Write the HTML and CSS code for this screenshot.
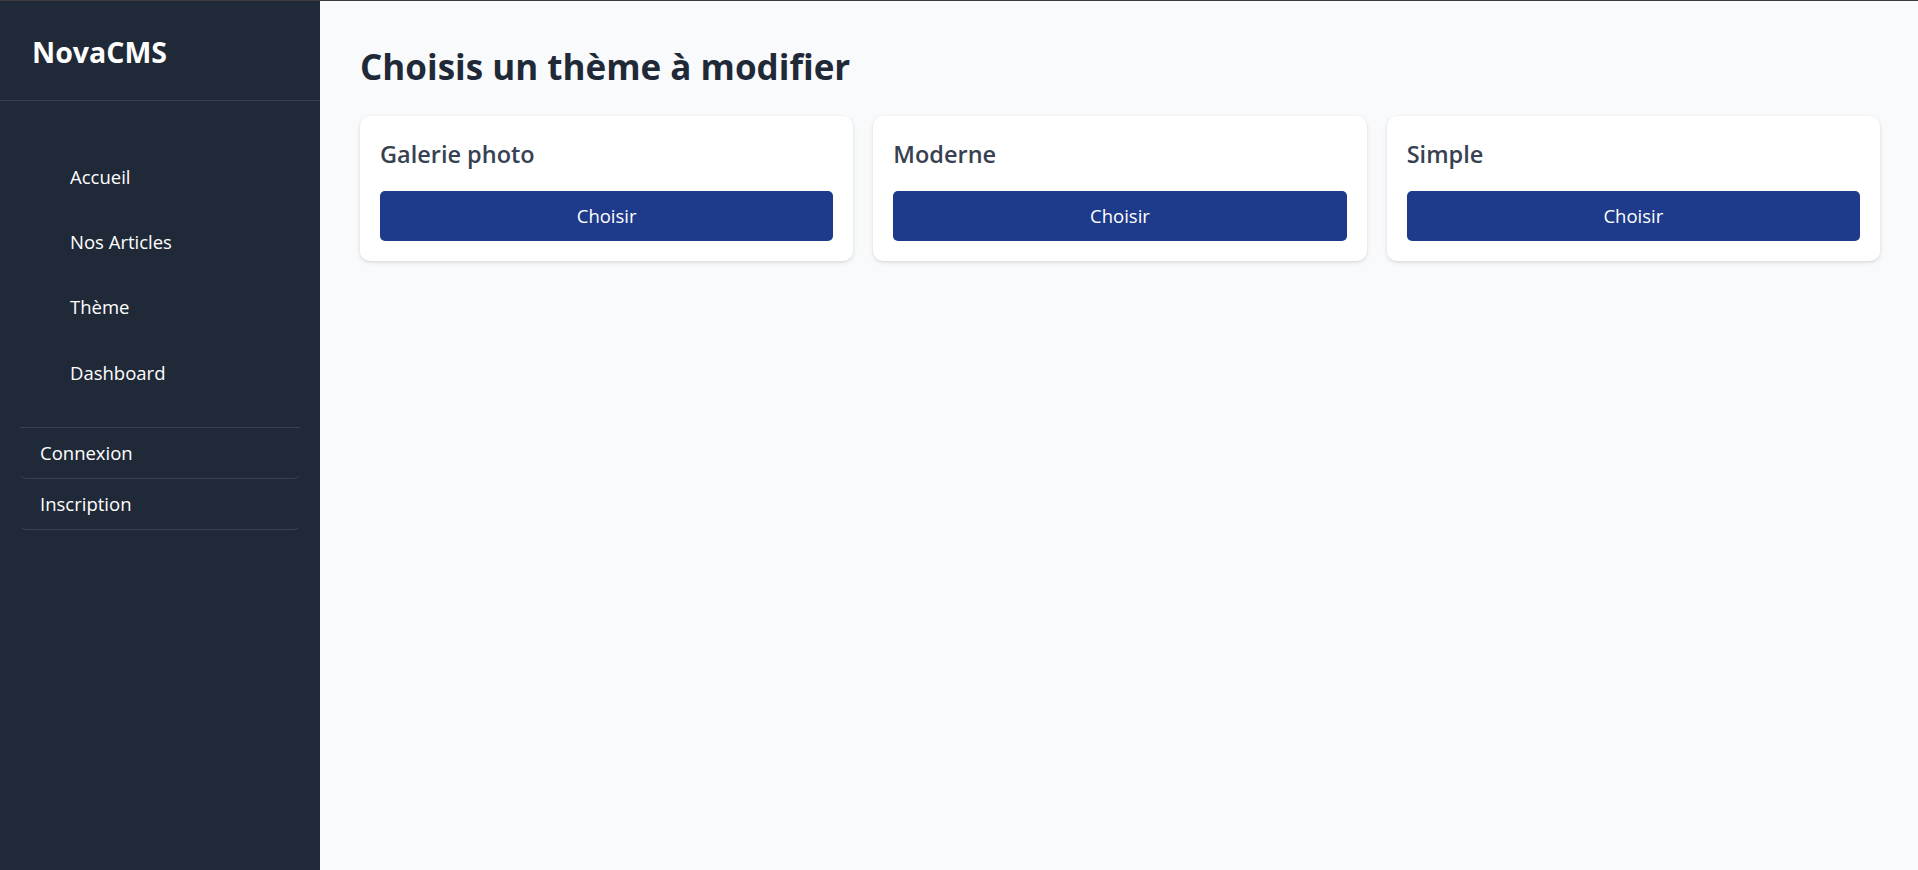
FILE: index.html
```html
<!DOCTYPE html>
<html lang="fr">
<head>
<meta charset="utf-8">
<title>NovaCMS - Thème</title>
<link rel="stylesheet" href="styles.css">
</head>
<body>
<div class="app">
  <aside class="sidebar">
    <div class="brand">NovaCMS</div>
    <ul class="nav">
      <li><a href="#">Accueil</a></li>
      <li><a href="#">Nos Articles</a></li>
      <li><a href="#">Thème</a></li>
      <li><a href="#">Dashboard</a></li>
    </ul>
    <div class="auth">
      <a class="auth-link" href="#">Connexion</a>
      <a class="auth-link" href="#">Inscription</a>
    </div>
  </aside>
  <main class="main">
    <h1 class="title">Choisis un thème à modifier</h1>
    <div class="grid">
      <div class="card">
        <h2 class="card-title">Galerie photo</h2>
        <button class="btn">Choisir</button>
      </div>
      <div class="card">
        <h2 class="card-title">Moderne</h2>
        <button class="btn">Choisir</button>
      </div>
      <div class="card">
        <h2 class="card-title">Simple</h2>
        <button class="btn">Choisir</button>
      </div>
    </div>
  </main>
</div>
</body>
</html>
```
FILE: styles.css
```css
* { box-sizing: border-box; }
html, body { height: 100%; }
body {
  margin: 0;
  font-family: "Open Sans", "Noto Sans", "Liberation Sans", sans-serif;
  background: #f9fafb;
  border-top: 1px solid #3c3c3c;
}
.app {
  display: flex;
  height: 869px;
}
.sidebar {
  width: 320px;
  flex: none;
  background: #1f2937;
  color: #ffffff;
  display: flex;
  flex-direction: column;
}
.brand {
  height: 100px;
  padding: 31px 32px 0;
  font-size: 28.5px;
  line-height: 40px;
  font-weight: 700;
  border-bottom: 1px solid #374151;
}
.nav {
  list-style: none;
  margin: 0;
  padding: 43px 0 0 70px;
}
.nav li { height: 65.33px; display: flex; align-items: center; }
.nav a {
  color: #ffffff;
  text-decoration: none;
  font-size: 18.5px;
  line-height: 30px;
}
.auth {
  margin: 22px 20px 0;
  border-top: 1px solid #374151;
  display: flex;
  flex-direction: column;
}
.auth-link {
  display: block;
  padding: 10px 20px;
  line-height: 30px;
  font-size: 18.5px;
  color: #ffffff;
  text-decoration: none;
  border-bottom: 1px solid #374151;
  border-radius: 0 0 6px 6px;
}
.main {
  flex: 1;
  padding: 43px 38px 40px 40px;
}
.title {
  margin: 0 0 26px;
  font-size: 35px;
  line-height: 46px;
  font-weight: 700;
  color: #1f2937;
}
.grid {
  display: grid;
  grid-template-columns: repeat(3, 1fr);
  gap: 20px;
}
.card {
  background: #ffffff;
  border-radius: 10px;
  padding: 20px;
  box-shadow: 0 1px 3px rgba(0,0,0,0.1), 0 2px 6px rgba(0,0,0,0.06);
}
.card-title {
  margin: 0 0 19px;
  padding-top: 1px;
  font-size: 23.5px;
  line-height: 35px;
  font-weight: 600;
  color: #374151;
}
.btn {
  display: block;
  width: 100%;
  height: 50px;
  border: 0;
  border-radius: 5px;
  background: #1e3a8a;
  color: #ffffff;
  font-family: inherit;
  font-size: 18.5px;
  line-height: 30px;
}
```
